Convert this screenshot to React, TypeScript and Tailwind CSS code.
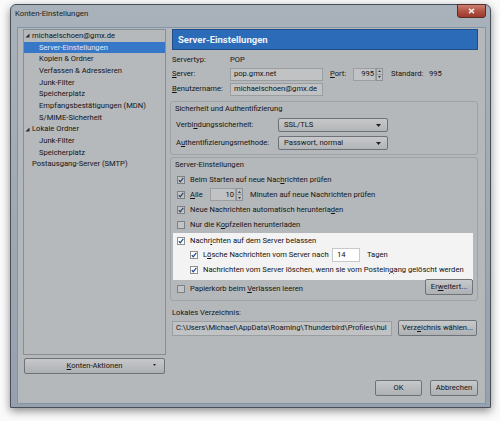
import React from 'react';

type TreeItem = { label: string; level: 0 | 1; arrow?: boolean; selected?: boolean };

const treeItems: TreeItem[] = [
  { label: 'michaelschoen@gmx.de', level: 0, arrow: true },
  { label: 'Server-Einstellungen', level: 1, selected: true },
  { label: 'Kopien & Ordner', level: 1 },
  { label: 'Verfassen & Adressieren', level: 1 },
  { label: 'Junk-Filter', level: 1 },
  { label: 'Speicherplatz', level: 1 },
  { label: 'Empfangsbestätigungen (MDN)', level: 1 },
  { label: 'S/MIME-Sicherheit', level: 1 },
  { label: 'Lokale Ordner', level: 0, arrow: true },
  { label: 'Junk-Filter', level: 1 },
  { label: 'Speicherplatz', level: 1 },
  { label: 'Postausgang-Server (SMTP)', level: 0 },
];

const Arrow = () => (
  <svg width="5" height="5" viewBox="0 0 5 5" className="shrink-0">
    <path d="M4.5 0.5 L4.5 4.5 L0.5 4.5 Z" fill="#2a2d30" />
  </svg>
);

const Check = ({ color }: { color: string }) => (
  <svg width="6" height="6" viewBox="0 0 6 6">
    <path d="M0.8 3.2 L2.3 4.8 L5.3 0.9" fill="none" stroke={color} strokeWidth="1.3" />
  </svg>
);

const Checkbox = ({ checked, light = false }: { checked: boolean; light?: boolean }) => (
  <span
    className={
      light
        ? 'flex h-[8px] w-[8px] shrink-0 items-center justify-center border border-[#8f8f8f] bg-white'
        : 'flex h-[8px] w-[8px] shrink-0 items-center justify-center border border-[#7d8185] bg-[#c2c4c6]'
    }
  >
    {checked && <Check color={light ? '#2b4c8c' : '#354666'} />}
  </span>
);

const Spinner = () => (
  <span className="flex h-[13px] w-[7px] shrink-0 flex-col border border-[#8e9195] bg-[#bdbfc2]">
    <span className="flex flex-1 items-center justify-center border-b border-[#9a9da0]">
      <svg width="3" height="2" viewBox="0 0 3 2"><path d="M0 2 L1.5 0 L3 2 Z" fill="#3a3d40" /></svg>
    </span>
    <span className="flex flex-1 items-center justify-center">
      <svg width="3" height="2" viewBox="0 0 3 2"><path d="M0 0 L1.5 2 L3 0 Z" fill="#3a3d40" /></svg>
    </span>
  </span>
);

const DropArrow = () => (
  <svg width="5" height="3" viewBox="0 0 5 3"><path d="M0 0 L5 0 L2.5 3 Z" fill="#1f2124" /></svg>
);

const Select = ({ value }: { value: string }) => (
  <div className="flex h-[14px] w-[110px] items-center justify-between rounded-[2px] border border-[#6e7276] bg-gradient-to-b from-[#c6c8ca] to-[#b2b5b8] pl-[5px] pr-[6px]">
    <span>{value}</span>
    <DropArrow />
  </div>
);

const Button = ({ children, className }: { children: React.ReactNode; className: string }) => (
  <div
    className={`flex h-[16px] items-center justify-center rounded-[2px] border border-[#6f7377] bg-gradient-to-b from-[#c6c8ca] to-[#aeb1b4] ${className}`}
  >
    {children}
  </div>
);

export default function App() {
  return (
    <div className="h-[421px] w-[500px] whitespace-nowrap bg-[#fafafa] pl-[10px] pt-[4px] font-[Roboto,sans-serif] text-[7.6px] leading-[10px] text-[#141414]">
      {/* window frame */}
      <div className="flex h-[404px] w-[481px] flex-col rounded-t-[6px] border border-[#47505a] bg-gradient-to-b from-[#a9b2ba] via-[#a0aab3] to-[#96a1ab] shadow-[0_3px_9px_rgba(0,0,0,0.45)]">
        <div className="flex h-[22px] items-start justify-between pl-[4px] pr-[4px]">
          <span className="pt-[4px] text-[7.8px] text-[#1c1e20]">Konten-Einstellungen</span>
          <div className="-mt-[1px] flex h-[14px] w-[29px] items-center justify-center rounded-b-[3px] border border-[#5b2c25] bg-gradient-to-b from-[#c98273] via-[#b25344] to-[#9c3a2d]">
            <svg width="7" height="6" viewBox="0 0 7 6">
              <path d="M1 0.8 L6 5.2 M6 0.8 L1 5.2" stroke="#f1ecea" strokeWidth="1.6" />
            </svg>
          </div>
        </div>

        {/* client area */}
        <div className="mb-[3px] ml-[6px] mr-[4px] flex flex-1 flex-col border border-[#7f95ab] bg-[#b5b8bb] pl-[5px] pr-[7px] pt-[1px]">
          <div className="flex h-[345px] gap-[6px]">
            {/* left column */}
            <div className="flex w-[143px] flex-col">
              <div className="h-[327px] border border-[#8a8e92] bg-[#b6b9bc]">
                {treeItems.map((item, i) => (
                  <div
                    key={i}
                    className={
                      item.selected
                        ? 'flex h-[11.7px] items-center bg-[#3777c7] pl-[15px] text-[#e4ebf5]'
                        : item.level === 1
                          ? 'flex h-[11.7px] items-center pl-[15px]'
                          : item.arrow
                            ? 'flex h-[11.7px] items-center gap-[2px] pl-[1px]'
                            : 'flex h-[11.7px] items-center pl-[8px]'
                    }
                  >
                    {item.arrow && (
                      <span className="flex w-[5px] justify-center">
                        <Arrow />
                      </span>
                    )}
                    <span>{item.label}</span>
                  </div>
                ))}
              </div>
              <Button className="relative mt-[3px] ml-[1px] w-[141px] h-[15px]">
                <span>
                  <u>K</u>onten-Aktionen
                </span>
                <span className="absolute right-[8px] top-[5px]">
                  <svg width="3" height="2" viewBox="0 0 3 2"><path d="M0 0 L3 0 L1.5 2 Z" fill="#222" /></svg>
                </span>
              </Button>
            </div>

            {/* right column */}
            <div className="flex w-[306px] flex-col">
              <div className="flex h-[21px] items-center border border-[#1d4c86] bg-[#2b6bb7] pl-[5px] text-[9.5px] font-bold text-[#eef3f9]">
                Server-Einstellungen
              </div>

              <div className="mt-[3px] flex h-[14px] items-center">
                <span className="w-[58px]">Servertyp:</span>
                <span>POP</span>
              </div>
              <div className="flex h-[14px] items-center">
                <span className="w-[58px]">
                  <u>S</u>erver:
                </span>
                <div className="flex h-[13px] w-[93px] items-center border border-[#9b9ea1] bg-[#c0c2c4] pl-[3px]">pop.gmx.net</div>
                <span className="ml-[7px] w-[23px]">
                  <u>P</u>ort:
                </span>
                <div className="flex h-[13px] w-[23px] items-center justify-end border border-[#9b9ea1] bg-[#c0c2c4] pr-[1px]">995</div>
                <Spinner />
                <span className="ml-[8px] w-[38px]">Standard:</span>
                <span>995</span>
              </div>
              <div className="flex h-[16px] items-center">
                <span className="w-[58px]">
                  <u>B</u>enutzername:
                </span>
                <div className="flex h-[13px] w-[93px] items-center border border-[#9b9ea1] bg-[#c0c2c4] pl-[3px]">michaelschoen@gmx.de</div>
              </div>

              {/* security group */}
              <div className="-ml-[2px] mt-[4px] h-[54px] rounded-[3px] border border-[#9ea2a6] pl-[5px]">
                <div className="flex h-[14px] items-center -ml-[1px]">Sicherheit und Authentifizierung</div>
                <div className="mt-[2px] flex h-[14px] items-center">
                  <span className="w-[102px]">
                    Verbi<u>n</u>dungssicherheit:
                  </span>
                  <Select value="SSL/TLS" />
                </div>
                <div className="mt-[4px] flex h-[14px] items-center">
                  <span className="w-[102px]">
                    A<u>u</u>thentifizierungsmethode:
                  </span>
                  <Select value="Passwort, normal" />
                </div>
              </div>

              {/* server settings group */}
              <div className="-ml-[2px] mt-[2px] flex h-[144px] flex-col rounded-[3px] border border-[#9ea2a6]">
                <div className="flex h-[14px] items-center pl-[4px]">Server-Einstellungen</div>
                <div className="flex h-[15px] items-center gap-[5px] pl-[6px]">
                  <Checkbox checked />
                  <span>
                    Beim Starten auf neue Nac<u>h</u>richten prüfen
                  </span>
                </div>
                <div className="flex h-[15px] items-center pl-[6px]">
                  <Checkbox checked />
                  <span className="ml-[5px] w-[20px]">
                    <u>A</u>lle
                  </span>
                  <div className="flex h-[13px] w-[26px] items-center justify-end border border-[#9b9ea1] bg-[#c0c2c4] pr-[1px]">10</div>
                  <Spinner />
                  <span className="ml-[7px]">Minuten auf neue Nachrichten prüfen</span>
                </div>
                <div className="flex h-[15px] items-center gap-[5px] pl-[6px]">
                  <Checkbox checked />
                  <span>
                    Neue Nachrichten automatisch herunterla<u>d</u>en
                  </span>
                </div>
                <div className="flex h-[15px] items-center gap-[5px] pl-[6px]">
                  <Checkbox checked={false} />
                  <span>
                    Nur die K<u>o</u>pfzeilen herunterladen
                  </span>
                </div>

                {/* highlighted block */}
                <div className="ml-[2px] mr-[4px] mt-[1px] flex flex-col bg-[#f3f3f3] pb-[2px] pt-[1px] text-[#111]">
                  <div className="flex h-[14px] items-center gap-[5px] pl-[4px]">
                    <Checkbox checked light />
                    <span>
                      Nachr<u>i</u>chten auf dem Server belassen
                    </span>
                  </div>
                  <div className="flex h-[14px] items-center pl-[17px]">
                    <Checkbox checked light />
                    <span className="ml-[5px] w-[129px]">
                      L<u>ö</u>sche Nachrichten vom Server nach
                    </span>
                    <div className="flex h-[14px] w-[28px] items-center border border-[#c8c8c8] bg-white pl-[4px]">14</div>
                    <span className="ml-[7px]">Tagen</span>
                  </div>
                  <div className="flex h-[16px] items-center gap-[5px] pl-[17px]">
                    <Checkbox checked light />
                    <span>
                      Nachrichten vom Server löschen, wenn sie vom Postein<u>g</u>ang gelöscht werden
                    </span>
                  </div>
                </div>

                <div className="flex h-[17px] items-center justify-between pl-[6px] pr-[4px]">
                  <div className="flex items-center gap-[5px]">
                    <Checkbox checked={false} />
                    <span>
                      Papierkorb beim <u>V</u>erlassen leeren
                    </span>
                  </div>
                  <Button className="-mt-[1px] w-[48px] self-start">
                    <span>
                      Er<u>w</u>eitert...
                    </span>
                  </Button>
                </div>
              </div>

              <div className="mt-[5px] flex h-[14px] items-center">Lokales Verzeichnis:</div>
              <div className="flex h-[16px] items-center gap-[6px]">
                <div className="flex h-[15px] w-[220px] items-center overflow-hidden border border-[#9b9ea1] bg-[#c0c2c4] pl-[3px]">
                  C:\Users\Michael\AppData\Roaming\Thunderbird\Profiles\hul
                </div>
                <Button className="w-[79px]">
                  <span>
                    Verz<u>e</u>ichnis wählen...
                  </span>
                </Button>
              </div>
            </div>
          </div>

          {/* dialog buttons */}
          <div className="mt-[6px] flex h-[16px] justify-end gap-[8px]">
            <Button className="w-[47px] border-[#4f7094]">OK</Button>
            <Button className="w-[48px]">Abbrechen</Button>
          </div>
        </div>
      </div>
    </div>
  );
}
